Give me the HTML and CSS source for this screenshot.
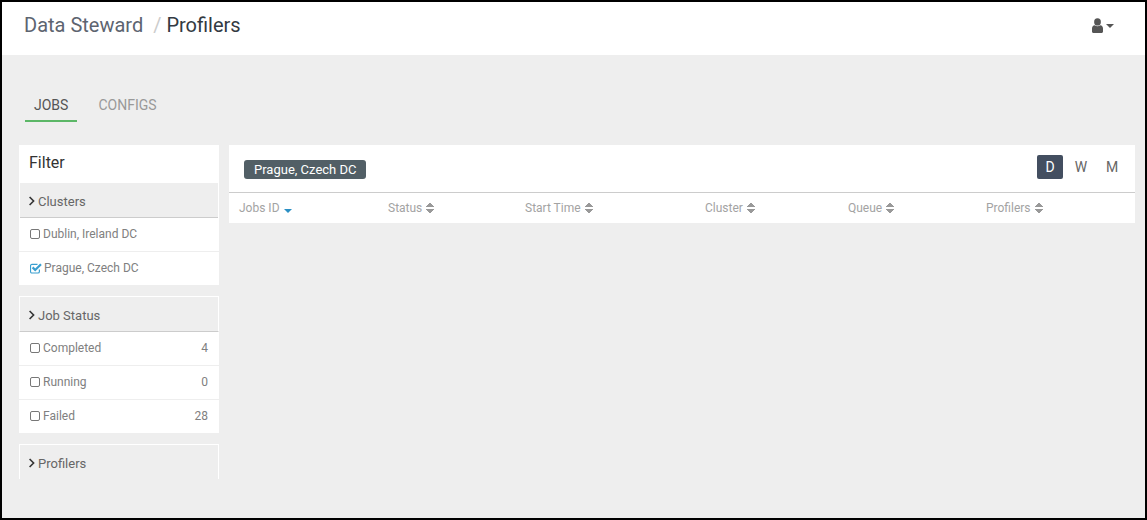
FILE: index.html
```html
<!DOCTYPE html>
<html lang="en">
<head>
    <meta charset="UTF-8">
    <title>Profilers</title>
    <link rel="stylesheet" href="styles.css">
</head>
<body>
    <div class="frame">
        <header class="topbar">
            <div class="crumbs">
                <span class="crumb-parent">Data Steward</span>
                <span class="crumb-sep">/</span>
                <span class="crumb-current">Profilers</span>
            </div>
            <div class="user-menu">
                <svg width="11" height="15" viewBox="0 0 12 15" preserveAspectRatio="none"><circle cx="6" cy="3.9" r="3.7" fill="#555"/><path d="M0 13.6V10.4C0 8.8 1.2 7.5 2.9 7.3C4.7 8.6 7.3 8.6 9.1 7.3C10.8 7.5 12 8.8 12 10.4V13.6C12 14.4 11.5 15 10.7 15H1.3C.5 15 0 14.4 0 13.6Z" fill="#555"/></svg>
                <span class="caret"></span>
            </div>
        </header>

        <nav class="tabs">
            <a class="tab active">JOBS</a>
            <a class="tab">CONFIGS</a>
        </nav>

        <div class="content">
            <aside class="sidebar">
                <section class="panel">
                    <div class="filter-title">Filter</div>
                    <div class="panel-head">
                        <svg class="chevron" width="7" height="10" viewBox="0 0 7 10"><path d="M.6 1L4.6 5L.6 9" fill="none" stroke="#333" stroke-width="1.6"/></svg>
                        Clusters
                    </div>
                    <div class="row">
                        <label><span class="box"></span>Dublin, Ireland DC</label>
                    </div>
                    <div class="row">
                        <label>
                            <svg class="box-on" width="12" height="11" viewBox="0 0 12 11"><path d="M9.4 6.5V8.4C9.4 9.3 8.8 10 7.9 10H2C1.1 10 .5 9.3 .5 8.4V2.9C.5 2 1.1 1.4 2 1.4H7.5" fill="none" stroke="#3a9fd0" stroke-width="1.2"/><path d="M2.6 4.4L5.2 7L11 1.2" fill="none" stroke="#3a9fd0" stroke-width="2.2"/></svg>Prague, Czech DC
                        </label>
                    </div>
                </section>

                <section class="panel">
                    <div class="panel-head outlined">
                        <svg class="chevron" width="7" height="10" viewBox="0 0 7 10"><path d="M.6 1L4.6 5L.6 9" fill="none" stroke="#333" stroke-width="1.6"/></svg>
                        Job Status
                    </div>
                    <div class="row">
                        <label><span class="box"></span>Completed</label>
                        <span class="count">4</span>
                    </div>
                    <div class="row">
                        <label><span class="box"></span>Running</label>
                        <span class="count">0</span>
                    </div>
                    <div class="row">
                        <label><span class="box"></span>Failed</label>
                        <span class="count">28</span>
                    </div>
                </section>

                <section class="panel">
                    <div class="panel-head outlined">
                        <svg class="chevron" width="7" height="10" viewBox="0 0 7 10"><path d="M.6 1L4.6 5L.6 9" fill="none" stroke="#333" stroke-width="1.6"/></svg>
                        Profilers
                    </div>
                </section>
            </aside>

            <main class="jobs">
                <div class="jobs-top">
                    <span class="tag">Prague, Czech DC</span>
                    <div class="range">
                        <span class="range-btn on">D</span>
                        <span class="range-btn">W</span>
                        <span class="range-btn">M</span>
                    </div>
                </div>
                <div class="jobs-cols">
                    <span class="col">Jobs ID <i class="sort-down"></i></span>
                    <span class="col">Status <i class="sort"></i></span>
                    <span class="col">Start Time <i class="sort"></i></span>
                    <span class="col">Cluster <i class="sort"></i></span>
                    <span class="col">Queue <i class="sort"></i></span>
                    <span class="col">Profilers <i class="sort"></i></span>
                </div>
            </main>
        </div>
    </div>
</body>
</html>
```

FILE: styles.css
```css
* {
    box-sizing: border-box;
}
html, body {
    margin: 0;
    padding: 0;
}
body {
    font-family: Roboto, "Liberation Sans", sans-serif;
    background: #000;
}
.frame {
    width: 1147px;
    height: 520px;
    border: 2px solid #000;
    background: #eee;
    overflow: hidden;
}
.topbar {
    height: 53px;
    background: #fff;
    display: flex;
    justify-content: space-between;
    padding: 0 31px 0 22px;
}
.crumbs {
    font-size: 20px;
    line-height: 46px;
}
.crumb-parent {
    color: #5d6470;
}
.crumb-sep {
    color: #ccc;
    margin-left: 5px;
}
.crumb-current {
    color: #333a42;
}
.user-menu {
    display: flex;
    align-items: center;
    gap: 3px;
    height: 46px;
}
.caret {
    width: 0;
    height: 0;
    border-left: 4px solid transparent;
    border-right: 4px solid transparent;
    border-top: 4px solid #555;
    margin-top: 2px;
}
.tabs {
    display: flex;
    gap: 12px;
    padding: 31px 0 0 23px;
    height: 90px;
}
.tab {
    font-size: 14px;
    line-height: 20px;
    color: #999;
    height: 36px;
    padding: 9px 9px 0;
}
.tab.active {
    color: #555;
    border-bottom: 2px solid #5cb767;
}
.content {
    display: flex;
    align-items: flex-start;
    gap: 10px;
    padding: 0 10px 0 17px;
}
.sidebar {
    width: 200px;
    height: 334px;
    overflow: hidden;
    display: flex;
    flex-direction: column;
    gap: 11px;
    flex-shrink: 0;
}
.panel {
    background: #fff;
    flex-shrink: 0;
}
.filter-title {
    font-size: 16px;
    line-height: 20px;
    color: #333;
    height: 38px;
    padding: 8px 10px 0;
}
.panel-head {
    height: 35px;
    margin: 0 1px;
    background: #eee;
    border-bottom: 1px solid #ccc;
    font-size: 13px;
    color: #666;
    display: flex;
    align-items: center;
    gap: 2px;
    padding: 2px 0 0 9px;
}
.panel-head.outlined {
    margin: 0;
    height: 36px;
    border: 1px solid #fff;
    border-bottom: 1px solid #ccc;
}
.row {
    height: 34px;
    display: flex;
    justify-content: space-between;
    align-items: center;
    padding: 0 11px 1px;
    border-top: 1px solid #eee;
    font-size: 12px;
    color: #808080;
}
.panel-head + .row {
    height: 33px;
    border-top: 0;
}
.row label {
    display: flex;
    align-items: center;
}
.box {
    width: 10px;
    height: 10px;
    border: 1px solid #777;
    border-radius: 2px;
    margin-right: 3px;
}
.box-on {
    margin-right: 2px;
}
.jobs {
    flex: 1;
    background: #fff;
}
.jobs-top {
    height: 48px;
    border-bottom: 1px solid #ccc;
    display: flex;
    justify-content: space-between;
    padding: 10px 10px 0 15px;
}
.tag {
    height: 19px;
    margin-top: 5px;
    padding: 0 10px;
    background: #525f66;
    color: #fff;
    font-size: 13px;
    line-height: 19px;
    border-radius: 3px;
}
.range {
    display: flex;
}
.range-btn {
    width: 26px;
    height: 24px;
    margin-left: 5px;
    text-align: center;
    font-size: 14px;
    line-height: 25px;
    color: #666;
    border-radius: 2px;
}
.range-btn.on {
    background: #434e60;
    color: #fff;
    margin-left: 0;
}
.jobs-cols {
    height: 30px;
    display: grid;
    grid-template-columns: 149px 137px 180px 143px 138px 1fr;
    padding-left: 10px;
    align-items: center;
    font-size: 12px;
    color: #a3a3a3;
}
.col {
    display: flex;
    align-items: center;
    gap: 4px;
}
.sort {
    display: inline-block;
    width: 8px;
    height: 10px;
    background:
        linear-gradient(to top left, #999 50%, transparent 51%) left top / 4px 4px no-repeat,
        linear-gradient(to top right, #999 50%, transparent 51%) right top / 4px 4px no-repeat,
        linear-gradient(to bottom left, #999 50%, transparent 51%) left bottom / 4px 4px no-repeat,
        linear-gradient(to bottom right, #999 50%, transparent 51%) right bottom / 4px 4px no-repeat;
}
.sort-down {
    width: 0;
    height: 0;
    border-left: 4px solid transparent;
    border-right: 4px solid transparent;
    border-top: 4px solid #2b8fc4;
    margin-top: 5px;
}
```
